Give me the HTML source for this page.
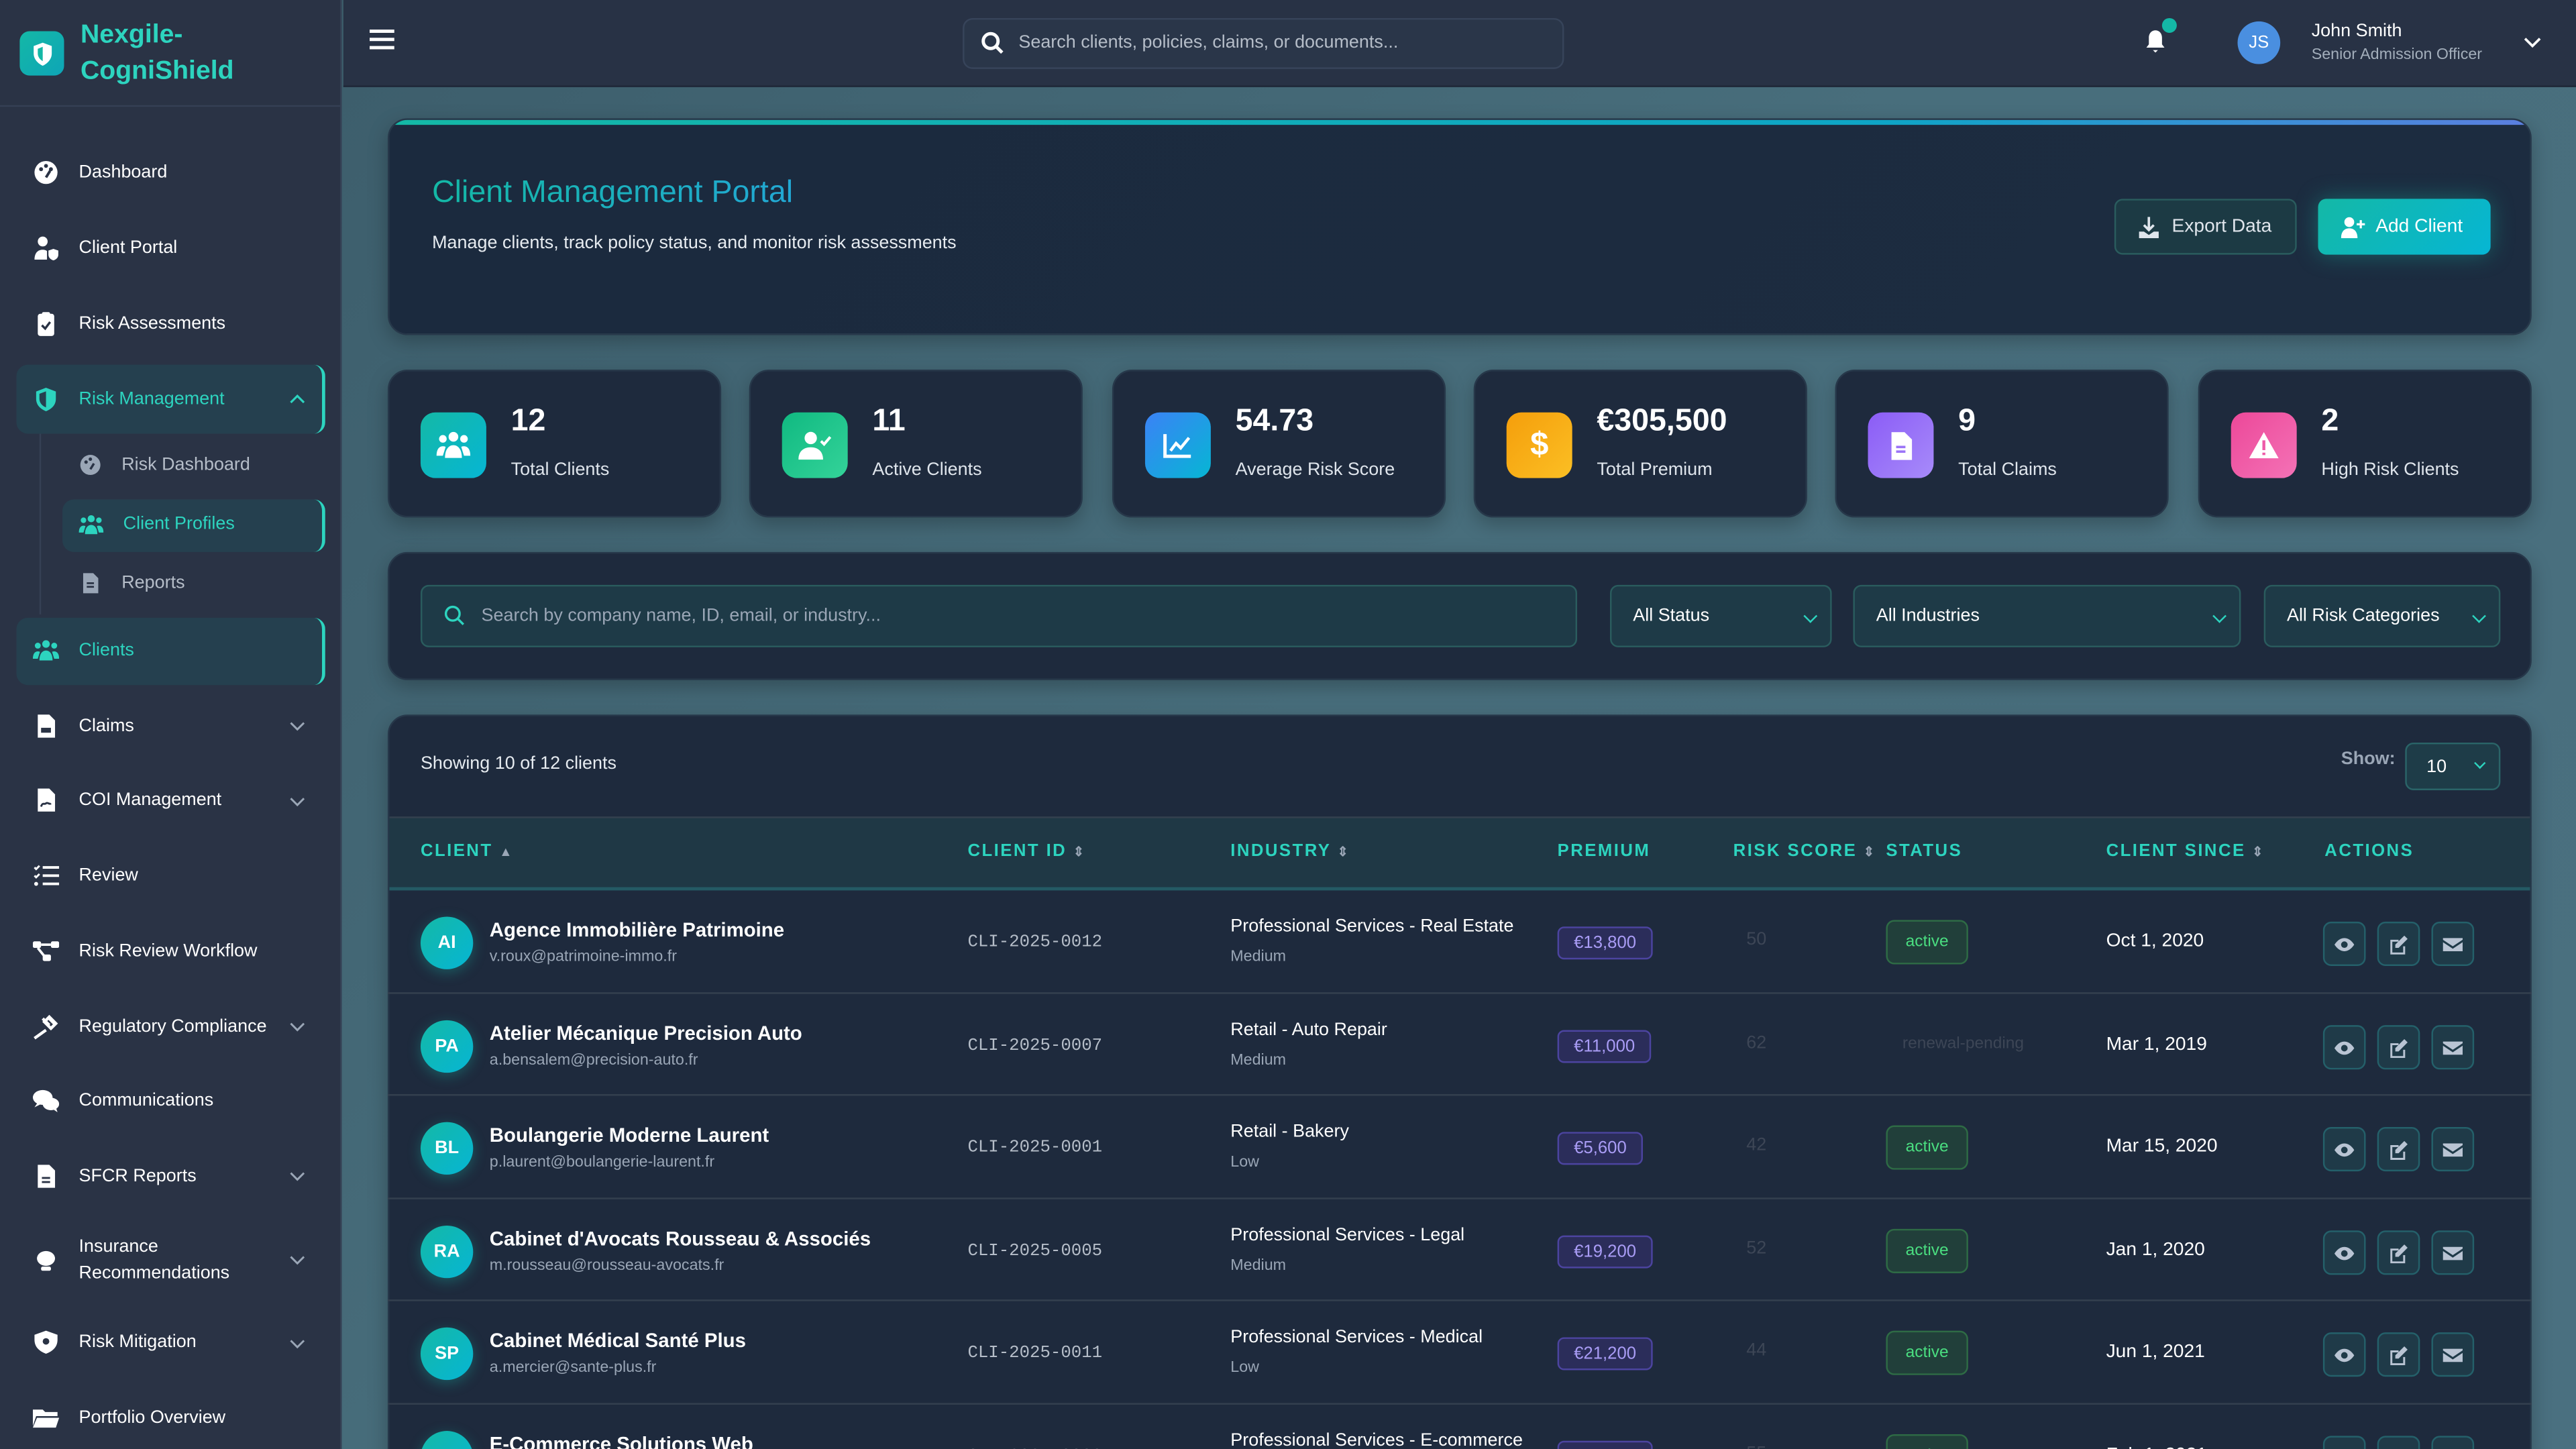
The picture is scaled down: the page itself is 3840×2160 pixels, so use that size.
<!DOCTYPE html>
<html><head><meta charset="utf-8">
<style>
*{box-sizing:border-box;margin:0;padding:0}
html,body{width:3840px;height:2160px;overflow:hidden;background:#2a3446}
#s{position:absolute;left:0;top:0;width:1568px;height:882px;transform:scale(2.44898);transform-origin:0 0;font-family:"Liberation Sans",sans-serif;color:#fff;overflow:hidden;background:linear-gradient(135deg,#3a5a68 0%,#486e7c 50%,#4a7080 100%)}
.a{position:absolute}
#side{left:0;top:0;width:208px;height:882px;background:#2a3345;border-right:1px solid #354054}
.ni{position:absolute;left:20px;font-size:11px;color:#fff;display:flex;align-items:center;height:16px}
.ni svg{width:16px;height:16px;margin-right:12px;fill:#fff}
.chev{position:absolute;left:176px;width:10px;height:6px}
.act{position:absolute;background:#25404f;border-radius:7px;border-right:2px solid #2dd4bf}
#hdr{left:209px;top:0;width:1359px;height:53px;background:#283245;border-bottom:1px solid #1f2838}
.card{position:absolute;background:#1e2a3d;border-radius:12px;border:1px solid #27384a;box-shadow:0 4px 12px rgba(0,0,0,.25)}
.stat .ic{position:absolute;left:19px;top:25px;width:40px;height:40px;border-radius:9px;display:flex;align-items:center;justify-content:center}
.stat .n{position:absolute;left:74px;top:20px;font-size:19px;font-weight:bold}
.stat .l{position:absolute;left:74px;top:54px;font-size:11px;color:#dfe5ec}
.sel{position:absolute;top:356px;height:38px;background:#1e3a47;border:1px solid #2a5c5e;border-radius:5px;font-size:11px;padding:12px 13px;color:#fff}
.sel i{position:absolute;right:9px;top:15px;width:6px;height:6px;border-right:1.3px solid #2dd4bf;border-bottom:1.3px solid #2dd4bf;transform:rotate(45deg)}
.th{position:absolute;top:512px;font-size:10.5px;color:#2dd4bf;letter-spacing:1px;font-weight:bold}
.row{position:absolute;left:236px;width:1305px;height:63px;border-top:1px solid #34404f}
.av{position:absolute;left:20px;top:16px;width:32px;height:32px;border-radius:50%;background:linear-gradient(135deg,#14b8a6,#06b6d4);font-size:11px;font-weight:bold;display:flex;align-items:center;justify-content:center;box-shadow:0 2px 8px rgba(20,184,166,.35)}
.nm{position:absolute;left:62px;top:17px;font-size:12px;font-weight:bold;color:#fff}
.em{position:absolute;left:62px;top:35px;font-size:9.5px;color:#9aa6b6}
.id{position:absolute;left:353px;top:26px;font-family:"Liberation Mono",monospace;font-size:10.5px;color:#b5bdc8}
.ind{position:absolute;left:513px;top:16px;font-size:11px;color:#fff}
.sub{position:absolute;left:513px;top:35px;font-size:9.5px;color:#9aa6b6}
.pr{position:absolute;left:712px;top:22px;height:20px;padding:0 9px;border:1px solid #4c44a0;background:#2b2d5a;border-radius:4px;color:#a99cf5;font-size:10.5px;line-height:18px}
.rs{position:absolute;left:827px;top:24px;font-size:11px;color:#3d4656}
.stt{position:absolute;left:912px;top:18px;height:27px;width:50px;border:1px solid #2e6b45;background:#213f3a;border-radius:5px;color:#4ade80;font-size:10px;text-align:center;line-height:25px}
.dt{position:absolute;left:1046px;top:25px;font-size:11.5px;color:#fff}
.ab{position:absolute;top:19px;width:26px;height:27px;border:1px solid #24606a;background:#1f3a48;border-radius:5px;display:flex;align-items:center;justify-content:center}
.ab svg{width:12px;height:12px;fill:#b9c4d3}
</style></head><body><div id="s">

<!-- SIDEBAR -->
<div id="side" class="a">
 <div class="a" style="left:12px;top:19px;width:27px;height:27px;border-radius:6px;background:linear-gradient(135deg,#14b8a6,#0ea5b7);display:flex;align-items:center;justify-content:center"><svg width="14" height="16" viewBox="0 0 14 16"><path d="M7 1L1.5 3v4.5C1.5 11 4 13.6 7 15c3-1.4 5.5-4 5.5-7.5V3z" fill="#fff"/><path d="M7 3.5L4 4.7v2.8C4 9.7 5.4 11.3 7 12.2z" fill="#14b8a6"/></svg></div>
 <div class="a" style="left:49px;top:11px;font-size:16px;font-weight:bold;color:#2dd4bf;line-height:22px">Nexgile-<br>CogniShield</div>
 <div class="a" style="left:0;top:64px;width:208px;height:1px;background:#354054"></div>

 <div class="ni" style="top:97px"><svg viewBox="0 0 16 16"><circle cx="8" cy="8" r="7"/><circle cx="5" cy="6" r="1.2" fill="#2a3345"/><circle cx="8" cy="4" r="1.2" fill="#2a3345"/><circle cx="11" cy="6" r="1.2" fill="#2a3345"/><path d="M8 11l2.5-4" stroke="#2a3345" stroke-width="1.6"/></svg>Dashboard</div>
 <div class="ni" style="top:143px"><svg viewBox="0 0 16 16"><circle cx="6" cy="4" r="3"/><path d="M1 15c0-4 2-6 5-6 1 0 2 .3 2.6.8V15z"/><path d="M9.5 9.5l3-1 3 1v2.5c0 2-1.5 3-3 3.5-1.5-.5-3-1.5-3-3.5z"/></svg>Client Portal</div>
 <div class="ni" style="top:189px"><svg viewBox="0 0 16 16"><rect x="3" y="2" width="10" height="13.5" rx="1.5"/><rect x="5.5" y="1" width="5" height="2.5" rx="1" fill="#fff"/><path d="M5.5 9l2 2 3-4" stroke="#2a3345" stroke-width="1.4" fill="none"/></svg>Risk Assessments</div>

 <div class="act" style="left:10px;top:222px;width:188px;height:42px"></div>
 <div class="ni" style="top:235px;color:#2dd4bf"><svg viewBox="0 0 16 16" style="fill:#2dd4bf"><path d="M8 1L2 3.3v4.5C2 11.5 4.6 14 8 15.3c3.4-1.3 6-3.8 6-7.5V3.3z"/><path d="M8 3.2L4 4.7v3C4 10.3 5.7 12 8 13z" fill="#25404f"/></svg>Risk Management</div>
 <svg class="chev" style="top:240px" viewBox="0 0 10 6"><path d="M1 5l4-4 4 4" stroke="#2dd4bf" stroke-width="1.3" fill="none"/></svg>
 <div class="a" style="left:24px;top:264px;width:1px;height:110px;background:#354054"></div>
 <div class="ni" style="left:48px;top:275px;color:#b5bdc8"><svg viewBox="0 0 16 16" style="fill:#9aa6b6;width:14px;height:14px"><circle cx="8" cy="8" r="7"/><circle cx="5" cy="6" r="1.2" fill="#2a3345"/><circle cx="8" cy="4" r="1.2" fill="#2a3345"/><path d="M8 11l2.5-4" stroke="#2a3345" stroke-width="1.6"/></svg>Risk Dashboard</div>
 <div class="act" style="left:38px;top:304px;width:160px;height:32px"></div>
 <div class="ni" style="left:48px;top:311px;color:#2dd4bf"><svg viewBox="0 0 16 16" style="fill:#2dd4bf;width:15px;height:15px"><circle cx="8" cy="4" r="2.3"/><circle cx="3" cy="5" r="1.8"/><circle cx="13" cy="5" r="1.8"/><path d="M4 14c0-4 1.8-6 4-6s4 2 4 6z"/><path d="M0 13c0-3 1.2-4.5 3-4.5 1 0 1.3.3 1.3.3L3 13z"/><path d="M16 13c0-3-1.2-4.5-3-4.5-1 0-1.3.3-1.3.3L13 13z"/></svg>Client Profiles</div>
 <div class="ni" style="left:48px;top:347px;color:#b5bdc8"><svg viewBox="0 0 16 16" style="fill:#9aa6b6;width:14px;height:14px"><path d="M3 1h7l3.5 3.5V15H3z"/><path d="M5.5 8h5M5.5 10.5h5" stroke="#2a3345" stroke-width="1.3"/></svg>Reports</div>

 <div class="act" style="left:10px;top:376px;width:188px;height:41px"></div>
 <div class="ni" style="top:388px;color:#2dd4bf"><svg viewBox="0 0 16 16" style="fill:#2dd4bf"><circle cx="8" cy="4" r="2.3"/><circle cx="3" cy="5" r="1.8"/><circle cx="13" cy="5" r="1.8"/><path d="M4 14c0-4 1.8-6 4-6s4 2 4 6z"/><path d="M0 13c0-3 1.2-4.5 3-4.5 1 0 1.3.3 1.3.3L3 13z"/><path d="M16 13c0-3-1.2-4.5-3-4.5-1 0-1.3.3-1.3.3L13 13z"/></svg>Clients</div>

 <div class="ni" style="top:434px"><svg viewBox="0 0 16 16"><path d="M3 1h7l3.5 3.5V15H3z"/><rect x="5" y="9" width="6" height="3" fill="#2a3345"/></svg>Claims</div>
 <svg class="chev" style="top:439px" viewBox="0 0 10 6"><path d="M1 1l4 4 4-4" stroke="#9aa6b6" stroke-width="1.2" fill="none"/></svg>
 <div class="ni" style="top:479px"><svg viewBox="0 0 16 16"><path d="M3 1h7l3.5 3.5V15H3z"/><path d="M5 12c1-3 2-1 3-2s2 1 3 0" stroke="#2a3345" stroke-width="1.2" fill="none"/></svg>COI Management</div>
 <svg class="chev" style="top:485px" viewBox="0 0 10 6"><path d="M1 1l4 4 4-4" stroke="#9aa6b6" stroke-width="1.2" fill="none"/></svg>
 <div class="ni" style="top:525px"><svg viewBox="0 0 16 16"><path d="M6 3h10M6 8h10M6 13h10" stroke="#fff" stroke-width="1.6"/><path d="M1 3l1 1 2-2M1 8l1 1 2-2" stroke="#fff" stroke-width="1.2" fill="none"/><circle cx="2" cy="13" r="1.2"/></svg>Review</div>
 <div class="ni" style="top:571px"><svg viewBox="0 0 16 16"><rect x="0" y="2" width="5" height="4" rx="1"/><rect x="11" y="2" width="5" height="4" rx="1"/><rect x="6" y="10" width="5" height="4" rx="1"/><path d="M5 4h6M3 6l4 5" stroke="#fff" stroke-width="1.5"/></svg>Risk Review Workflow</div>
 <div class="ni" style="top:617px"><svg viewBox="0 0 16 16"><path d="M1 15l7-5M6 3l4 4M9 2l4 4M7 5l3-3 4 4-3 3z" stroke="#fff" stroke-width="1.8" fill="none"/></svg>Regulatory Compliance</div>
 <svg class="chev" style="top:622px" viewBox="0 0 10 6"><path d="M1 1l4 4 4-4" stroke="#9aa6b6" stroke-width="1.2" fill="none"/></svg>
 <div class="ni" style="top:662px"><svg viewBox="0 0 16 16"><ellipse cx="6" cy="6" rx="6" ry="4.5"/><path d="M1 12l2-3 2 1z"/><ellipse cx="11" cy="10" rx="5" ry="3.8"/><path d="M15 15l-1-3-2 1z"/></svg>Communications</div>
 <div class="ni" style="top:708px"><svg viewBox="0 0 16 16"><path d="M3 1h7l3.5 3.5V15H3z"/><path d="M5.5 9h5M5.5 11.5h5" stroke="#2a3345" stroke-width="1.2"/></svg>SFCR Reports</div>
 <svg class="chev" style="top:713px" viewBox="0 0 10 6"><path d="M1 1l4 4 4-4" stroke="#9aa6b6" stroke-width="1.2" fill="none"/></svg>
 <div class="ni" style="top:752px;height:30px;line-height:16px"><svg viewBox="0 0 16 16"><ellipse cx="8" cy="7" rx="5.5" ry="4.5"/><rect x="5" y="12" width="6" height="2.5" rx="1"/></svg>Insurance<br>Recommendations</div>
 <svg class="chev" style="top:764px" viewBox="0 0 10 6"><path d="M1 1l4 4 4-4" stroke="#9aa6b6" stroke-width="1.2" fill="none"/></svg>
 <div class="ni" style="top:809px"><svg viewBox="0 0 16 16"><path d="M8 1L1 3.5v3C1 11 4 13.5 8 15c4-1.5 7-4 7-8.5v-3z"/><circle cx="8" cy="7.5" r="2" fill="#2a3345"/></svg>Risk Mitigation</div>
 <svg class="chev" style="top:815px" viewBox="0 0 10 6"><path d="M1 1l4 4 4-4" stroke="#9aa6b6" stroke-width="1.2" fill="none"/></svg>
 <div class="ni" style="top:855px"><svg viewBox="0 0 16 16"><path d="M0 3h6l1.5 1.5H15V7H2L0 13z"/><path d="M2.5 8H16l-2 6H0z"/></svg>Portfolio Overview</div>
</div>

<!-- HEADER -->
<div id="hdr" class="a">
 <div class="a" style="left:16px;top:18px;width:15px;height:2px;background:#fff;box-shadow:0 5px 0 #fff,0 10px 0 #fff"></div>
 <div class="a" style="left:377px;top:11px;width:366px;height:31px;border:1px solid #37445a;border-radius:6px;background:#2a3649"></div>
 <svg class="a" style="left:388px;top:19px" width="14" height="14" viewBox="0 0 14 14"><circle cx="6" cy="6" r="4.5" stroke="#fff" stroke-width="2" fill="none"/><path d="M9.5 9.5L13 13" stroke="#fff" stroke-width="2"/></svg>
 <div class="a" style="left:411px;top:20px;font-size:11px;color:#b5bdc8">Search clients, policies, claims, or documents...</div>
 <svg class="a" style="left:1096px;top:17px" width="14" height="16" viewBox="0 0 14 16"><path d="M7 1.5c-2.5 0-4 2-4 4.5v4L1.5 12h11L11 10V6c0-2.5-1.5-4.5-4-4.5z" fill="#fff"/><path d="M5.5 13.5h3L7 15z" fill="#fff"/></svg>
 <div class="a" style="left:1107px;top:11px;width:9px;height:9px;border-radius:50%;background:#14b8a6"></div>
 <div class="a" style="left:1153px;top:13px;width:26px;height:26px;border-radius:50%;background:#4a8fe0;font-size:10.5px;display:flex;align-items:center;justify-content:center">JS</div>
 <div class="a" style="left:1198px;top:13px;font-size:11px;color:#fff">John Smith</div>
 <div class="a" style="left:1198px;top:28px;font-size:9.5px;color:#a3aebb">Senior Admission Officer</div>
 <svg class="a" style="left:1327px;top:22px" width="11" height="8" viewBox="0 0 11 8"><path d="M1 1.5l4.5 4.5 4.5-4.5" stroke="#fff" stroke-width="1.5" fill="none"/></svg>
</div>

<!-- HERO -->
<div class="card" style="left:236px;top:72px;width:1305px;height:132px;background:linear-gradient(135deg,#1b2a3e,#1c2c40);overflow:hidden">
 <div class="a" style="left:0;top:0;width:100%;height:3px;background:linear-gradient(90deg,#14b8a6,#0ea5c6 70%,#5b7fe0)"></div>
 <div class="a" style="left:26px;top:34px;font-size:19px;color:#2dd4bf;background:linear-gradient(90deg,#14b8a6,#22a8d4);-webkit-background-clip:text;color:transparent">Client Management Portal</div>
 <div class="a" style="left:26px;top:69px;font-size:11px;color:#e6ebf0">Manage clients, track policy status, and monitor risk assessments</div>
 <div class="a" style="left:1050px;top:48px;width:111px;height:34px;border:1px solid #2a5c5e;background:#1c3a44;border-radius:5px;font-size:11.5px;color:#dfe5ec;display:flex;align-items:center;padding-left:14px"><svg width="12" height="13" viewBox="0 0 12 13" style="margin-right:8px"><path d="M6 0v8M3 5l3 3 3-3" stroke="#dfe5ec" stroke-width="1.5" fill="none"/><path d="M0 9h3l3 2 3-2h3v4H0z" fill="#dfe5ec"/></svg>Export Data</div>
 <div class="a" style="left:1174px;top:48px;width:105px;height:34px;background:linear-gradient(135deg,#14b8a6,#06b6d4);border-radius:5px;font-size:11.5px;color:#fff;display:flex;align-items:center;padding-left:14px;box-shadow:0 0 14px rgba(20,184,166,.4)"><svg width="15" height="13" viewBox="0 0 15 13" style="margin-right:6px"><circle cx="5" cy="3.2" r="3" fill="#fff"/><path d="M0 13c0-4 2-6 5-6s5 2 5 6z" fill="#fff"/><path d="M12 2v5M9.5 4.5h5" stroke="#fff" stroke-width="1.3"/></svg>Add Client</div>
</div>

<!-- STATS -->
<div class="card stat" style="left:236px;top:225px;width:203px;height:90px"><div class="ic" style="background:linear-gradient(135deg,#14b8a6,#06b6d4)"><svg width="22" height="18" viewBox="0 0 16 14" fill="#fff"><circle cx="8" cy="3" r="2.3"/><circle cx="3" cy="4" r="1.8"/><circle cx="13" cy="4" r="1.8"/><path d="M4 13c0-4 1.8-6 4-6s4 2 4 6z"/><path d="M0 12c0-3 1.2-4.5 3-4.5 1 0 1.3.3 1.3.3L3 12z"/><path d="M16 12c0-3-1.2-4.5-3-4.5-1 0-1.3.3-1.3.3L13 12z"/></svg></div><div class="n">12</div><div class="l">Total Clients</div></div>
<div class="card stat" style="left:456px;top:225px;width:203px;height:90px"><div class="ic" style="background:linear-gradient(135deg,#10b981,#34d399)"><svg width="20" height="18" viewBox="0 0 16 14" fill="#fff"><circle cx="6" cy="3.5" r="3"/><path d="M0 14c0-4 2.5-6 6-6s6 2 6 6z"/><path d="M11 5l1.5 1.5L15.5 3" stroke="#fff" stroke-width="1.3" fill="none"/></svg></div><div class="n">11</div><div class="l">Active Clients</div></div>
<div class="card stat" style="left:677px;top:225px;width:203px;height:90px"><div class="ic" style="background:linear-gradient(135deg,#3b82f6,#06b6d4)"><svg width="18" height="16" viewBox="0 0 16 14"><path d="M1 1v12h14" stroke="#fff" stroke-width="1.8" fill="none"/><path d="M4 10l3-4 2.5 2.5L14 3" stroke="#fff" stroke-width="1.6" fill="none"/></svg></div><div class="n">54.73</div><div class="l">Average Risk Score</div></div>
<div class="card stat" style="left:897px;top:225px;width:203px;height:90px"><div class="ic" style="background:linear-gradient(135deg,#f59e0b,#fbbf24)"><span style="font-size:20px;font-weight:bold">$</span></div><div class="n">€305,500</div><div class="l">Total Premium</div></div>
<div class="card stat" style="left:1117px;top:225px;width:203px;height:90px"><div class="ic" style="background:linear-gradient(135deg,#8b5cf6,#a78bfa)"><svg width="14" height="17" viewBox="0 0 12 15"><path d="M1 0h7l4 4v11H1z" fill="#fff"/><path d="M3.5 8h5M3.5 10.5h5" stroke="#9b74f7" stroke-width="1.3"/></svg></div><div class="n">9</div><div class="l">Total Claims</div></div>
<div class="card stat" style="left:1338px;top:225px;width:203px;height:90px"><div class="ic" style="background:linear-gradient(135deg,#ec4899,#f472b6)"><svg width="18" height="16" viewBox="0 0 18 16"><path d="M9 0l9 16H0z" fill="#fff"/><path d="M9 5v6M9 12.5v1.5" stroke="#ee5aa8" stroke-width="1.8"/></svg></div><div class="n">2</div><div class="l">High Risk Clients</div></div>

<!-- FILTERS -->
<div class="card" style="left:236px;top:336px;width:1305px;height:78px"></div>
<div class="sel" style="left:256px;width:704px;color:#9aa6b6;padding-left:36px">Search by company name, ID, email, or industry...</div>
<svg class="a" style="left:270px;top:368px" width="13" height="13" viewBox="0 0 14 14"><circle cx="6" cy="6" r="4.5" stroke="#2dd4bf" stroke-width="1.5" fill="none"/><path d="M9.5 9.5L13 13" stroke="#2dd4bf" stroke-width="1.5"/></svg>
<div class="sel" style="left:980px;width:135px">All Status<i></i></div>
<div class="sel" style="left:1128px;width:236px">All Industries<i></i></div>
<div class="sel" style="left:1378px;width:144px">All Risk Categories<i></i></div>

<!-- TABLE -->
<div class="card" style="left:236px;top:435px;width:1305px;height:460px;overflow:hidden">
 <div class="a" style="left:19px;top:23px;font-size:11px;color:#e6ebf0">Showing 10 of 12 clients</div>
 <div class="a" style="left:1188px;top:20px;font-size:11px;color:#9aa6b6;font-weight:bold">Show:</div>
 <div class="a" style="left:1227px;top:16px;width:58px;height:29px;border:1px solid #2a6468;background:#1e3c48;border-radius:5px;font-size:11px;padding:8px 0 0 12px">10<span style="position:absolute;right:9px;top:9px;width:5px;height:5px;border-right:1.3px solid #2dd4bf;border-bottom:1.3px solid #2dd4bf;transform:rotate(45deg)"></span></div>
 <div class="a" style="left:0;top:61px;width:100%;height:45px;background:#1f3845;border-top:1px solid #34404f;border-bottom:2px solid #245a64"></div>
</div>
<div class="th" style="left:256px">CLIENT <span style="color:#9aa6b6;font-size:8px">&#9650;</span></div>
<div class="th" style="left:589px">CLIENT ID <span style="color:#9aa6b6;font-size:8px">&#8661;</span></div>
<div class="th" style="left:749px">INDUSTRY <span style="color:#9aa6b6;font-size:8px">&#8661;</span></div>
<div class="th" style="left:948px">PREMIUM</div>
<div class="th" style="left:1055px">RISK SCORE <span style="color:#9aa6b6;font-size:8px">&#8661;</span></div>
<div class="th" style="left:1148px">STATUS</div>
<div class="th" style="left:1282px">CLIENT SINCE <span style="color:#9aa6b6;font-size:8px">&#8661;</span></div>
<div class="th" style="left:1415px">ACTIONS</div>

<div class="row" style="top:542px;border-top:none"><div class="av">AI</div><div class="nm">Agence Immobilière Patrimoine</div><div class="em">v.roux@patrimoine-immo.fr</div><div class="id">CLI-2025-0012</div><div class="ind">Professional Services - Real Estate</div><div class="sub">Medium</div><div class="pr">€13,800</div><div class="rs">50</div><div class="stt">active</div><div class="dt">Oct 1, 2020</div>
<div class="ab" style="left:1178px"><svg viewBox="0 0 12 12"><path d="M6 2C3 2 1 4.5 0 6c1 1.5 3 4 6 4s5-2.5 6-4c-1-1.5-3-4-6-4z"/><circle cx="6" cy="6" r="2" fill="#1f3a48"/></svg></div><div class="ab" style="left:1211px"><svg viewBox="0 0 12 12"><path d="M1 3h5v1.2H2.2v6.6h6.6V7H10v5H1z"/><path d="M9.5 0.5l2 2L6 8H4V6z"/></svg></div><div class="ab" style="left:1244px"><svg viewBox="0 0 12 12"><path d="M0 2h12v1L6 7 0 3z"/><path d="M0 4.5l6 4 6-4V10H0z"/></svg></div></div>

<div class="row" style="top:604px"><div class="av">PA</div><div class="nm">Atelier Mécanique Precision Auto</div><div class="em">a.bensalem@precision-auto.fr</div><div class="id">CLI-2025-0007</div><div class="ind">Retail - Auto Repair</div><div class="sub">Medium</div><div class="pr">€11,000</div><div class="rs">62</div><div style="position:absolute;left:922px;top:25px;font-size:10px;color:#3d4656">renewal-pending</div><div class="dt">Mar 1, 2019</div>
<div class="ab" style="left:1178px"><svg viewBox="0 0 12 12"><path d="M6 2C3 2 1 4.5 0 6c1 1.5 3 4 6 4s5-2.5 6-4c-1-1.5-3-4-6-4z"/><circle cx="6" cy="6" r="2" fill="#1f3a48"/></svg></div><div class="ab" style="left:1211px"><svg viewBox="0 0 12 12"><path d="M1 3h5v1.2H2.2v6.6h6.6V7H10v5H1z"/><path d="M9.5 0.5l2 2L6 8H4V6z"/></svg></div><div class="ab" style="left:1244px"><svg viewBox="0 0 12 12"><path d="M0 2h12v1L6 7 0 3z"/><path d="M0 4.5l6 4 6-4V10H0z"/></svg></div></div>

<div class="row" style="top:666px"><div class="av">BL</div><div class="nm">Boulangerie Moderne Laurent</div><div class="em">p.laurent@boulangerie-laurent.fr</div><div class="id">CLI-2025-0001</div><div class="ind">Retail - Bakery</div><div class="sub">Low</div><div class="pr">€5,600</div><div class="rs">42</div><div class="stt">active</div><div class="dt">Mar 15, 2020</div>
<div class="ab" style="left:1178px"><svg viewBox="0 0 12 12"><path d="M6 2C3 2 1 4.5 0 6c1 1.5 3 4 6 4s5-2.5 6-4c-1-1.5-3-4-6-4z"/><circle cx="6" cy="6" r="2" fill="#1f3a48"/></svg></div><div class="ab" style="left:1211px"><svg viewBox="0 0 12 12"><path d="M1 3h5v1.2H2.2v6.6h6.6V7H10v5H1z"/><path d="M9.5 0.5l2 2L6 8H4V6z"/></svg></div><div class="ab" style="left:1244px"><svg viewBox="0 0 12 12"><path d="M0 2h12v1L6 7 0 3z"/><path d="M0 4.5l6 4 6-4V10H0z"/></svg></div></div>

<div class="row" style="top:729px"><div class="av">RA</div><div class="nm">Cabinet d'Avocats Rousseau &amp; Associés</div><div class="em">m.rousseau@rousseau-avocats.fr</div><div class="id">CLI-2025-0005</div><div class="ind">Professional Services - Legal</div><div class="sub">Medium</div><div class="pr">€19,200</div><div class="rs">52</div><div class="stt">active</div><div class="dt">Jan 1, 2020</div>
<div class="ab" style="left:1178px"><svg viewBox="0 0 12 12"><path d="M6 2C3 2 1 4.5 0 6c1 1.5 3 4 6 4s5-2.5 6-4c-1-1.5-3-4-6-4z"/><circle cx="6" cy="6" r="2" fill="#1f3a48"/></svg></div><div class="ab" style="left:1211px"><svg viewBox="0 0 12 12"><path d="M1 3h5v1.2H2.2v6.6h6.6V7H10v5H1z"/><path d="M9.5 0.5l2 2L6 8H4V6z"/></svg></div><div class="ab" style="left:1244px"><svg viewBox="0 0 12 12"><path d="M0 2h12v1L6 7 0 3z"/><path d="M0 4.5l6 4 6-4V10H0z"/></svg></div></div>

<div class="row" style="top:791px"><div class="av">SP</div><div class="nm">Cabinet Médical Santé Plus</div><div class="em">a.mercier@sante-plus.fr</div><div class="id">CLI-2025-0011</div><div class="ind">Professional Services - Medical</div><div class="sub">Low</div><div class="pr">€21,200</div><div class="rs">44</div><div class="stt">active</div><div class="dt">Jun 1, 2021</div>
<div class="ab" style="left:1178px"><svg viewBox="0 0 12 12"><path d="M6 2C3 2 1 4.5 0 6c1 1.5 3 4 6 4s5-2.5 6-4c-1-1.5-3-4-6-4z"/><circle cx="6" cy="6" r="2" fill="#1f3a48"/></svg></div><div class="ab" style="left:1211px"><svg viewBox="0 0 12 12"><path d="M1 3h5v1.2H2.2v6.6h6.6V7H10v5H1z"/><path d="M9.5 0.5l2 2L6 8H4V6z"/></svg></div><div class="ab" style="left:1244px"><svg viewBox="0 0 12 12"><path d="M0 2h12v1L6 7 0 3z"/><path d="M0 4.5l6 4 6-4V10H0z"/></svg></div></div>

<div class="row" style="top:854px"><div class="av">EC</div><div class="nm">E-Commerce Solutions Web</div><div class="em">contact@ecommerce-web.fr</div><div class="id">CLI-2025-0009</div><div class="ind">Professional Services - E-commerce</div><div class="sub">Medium</div><div class="pr">€15,400</div><div class="rs">55</div><div class="stt">active</div><div class="dt">Feb 1, 2021</div>
<div class="ab" style="left:1178px"><svg viewBox="0 0 12 12"><path d="M6 2C3 2 1 4.5 0 6c1 1.5 3 4 6 4s5-2.5 6-4c-1-1.5-3-4-6-4z"/><circle cx="6" cy="6" r="2" fill="#1f3a48"/></svg></div><div class="ab" style="left:1211px"><svg viewBox="0 0 12 12"><path d="M1 3h5v1.2H2.2v6.6h6.6V7H10v5H1z"/><path d="M9.5 0.5l2 2L6 8H4V6z"/></svg></div><div class="ab" style="left:1244px"><svg viewBox="0 0 12 12"><path d="M0 2h12v1L6 7 0 3z"/><path d="M0 4.5l6 4 6-4V10H0z"/></svg></div></div>

</div></body></html>
